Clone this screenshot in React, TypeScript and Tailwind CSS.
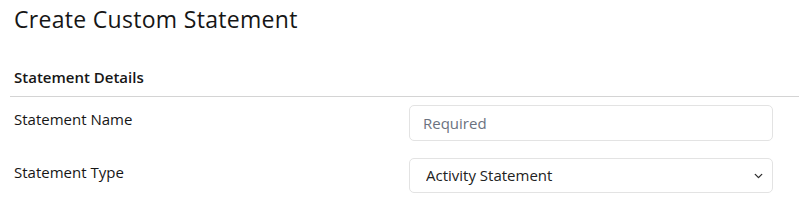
import { ChevronDown } from 'lucide-react';

export default function App() {
  return (
    <div className="min-h-[206px] w-[799px] bg-white font-['Open_Sans',sans-serif] text-[#161616]">
      <h1 className="pl-[14px] pt-[4px] text-[23px] leading-[30px] font-normal tracking-[0.3px]">
        Create Custom Statement
      </h1>

      <div className="mt-[33px] ml-[10px] border-b border-[#d4d4d4] pb-[9px] pl-[4px]">
        <h2 className="text-[15px] leading-[20px] font-semibold">Statement Details</h2>
      </div>

      <div className="mt-[8px] flex flex-col gap-[17px] pl-[14px] pr-[26px]">
        <div className="flex items-start">
          <label className="w-[395px] pt-[4px] text-[15px] leading-[20px]">Statement Name</label>
          <input
            type="text"
            placeholder="Required"
            className="h-[36px] flex-1 rounded-[5px] border border-[#e3e3e3] px-[13px] text-[15px] text-[#333] outline-none placeholder:text-[#6b7280]"
          />
        </div>
        <div className="flex items-start">
          <label className="w-[395px] pt-[4px] text-[15px] leading-[20px]">Statement Type</label>
          <div className="relative flex-1">
            <select
              defaultValue="activity"
              className="h-[35px] w-full appearance-none rounded-[5px] border border-[#e3e3e3] bg-white pl-[16px] text-[15px] text-[#222] outline-none"
            >
              <option value="activity">Activity Statement</option>
            </select>
            <ChevronDown
              className="pointer-events-none absolute top-1/2 right-[8px] size-[13px] -translate-y-1/2 text-[#333]"
              strokeWidth={2.5}
            />
          </div>
        </div>
      </div>
    </div>
  );
}
